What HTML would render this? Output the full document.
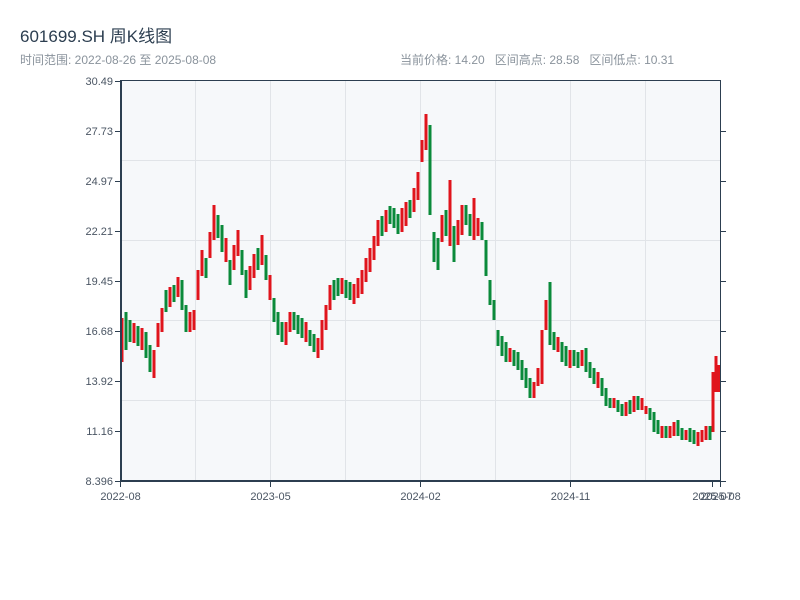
<!DOCTYPE html>
<html><head><meta charset="utf-8"><style>
body{margin:0;width:800px;height:600px;background:#fff;font-family:"Liberation Sans","Noto Sans CJK SC",sans-serif;overflow:hidden;position:relative}
.t{position:absolute;left:20px;top:22px;font-size:17px;color:#2c3e50;z-index:2}
.s{position:absolute;top:51px;font-size:12px;color:#8a939c;z-index:2}
svg{position:absolute;left:0;top:0}
</style></head><body>
<div class="t">601699.SH 周K线图</div>
<div class="s" style="left:20px">时间范围: 2022-08-26 至 2025-08-08</div>
<div class="s" style="left:400px">当前价格: 14.20&nbsp;&nbsp; 区间高点: 28.58&nbsp;&nbsp; 区间低点: 10.31</div>
<svg width="800" height="600" font-family="Liberation Sans, sans-serif">
<rect x="121" y="81" width="599" height="400" fill="#f6f8fa"/>
<g stroke="#e1e4e8" stroke-width="1">
<line x1="121" x2="720" y1="160.5" y2="160.5"/><line x1="121" x2="720" y1="240.5" y2="240.5"/><line x1="121" x2="720" y1="320.5" y2="320.5"/><line x1="121" x2="720" y1="400.5" y2="400.5"/>
<line x1="195.5" x2="195.5" y1="81" y2="481"/><line x1="270.5" x2="270.5" y1="81" y2="481"/><line x1="345.5" x2="345.5" y1="81" y2="481"/><line x1="420.5" x2="420.5" y1="81" y2="481"/><line x1="495.5" x2="495.5" y1="81" y2="481"/><line x1="570.5" x2="570.5" y1="81" y2="481"/><line x1="645.5" x2="645.5" y1="81" y2="481"/>
</g>
<path fill="none" stroke="#e0141c" stroke-width="3" d="M122 318V362M134 323V343M142 328V350M154 350V378M158 323V347M162 308V332M170 287V307M178 277V297M190 312V332M194 310V330M198 270V300M202 250V276M210 232V258M214 205V240M226 238V262M234 245V270M238 230V256M250 266V290M254 254V278M262 235V265M270 275V300M286 322V345M290 312V332M306 322V342M318 338V358M322 320V350M326 305V330M330 285V310M342 278V294M354 284V304M358 278V298M362 270V294M366 258V282M370 248V272M374 236V260M378 220V246M386 210V232M402 208V232M406 202V226M414 188V212M418 172V200M422 140V162M426 114V150M442 215V242M450 180V246M458 220V245M462 205V235M474 198V240M478 218V236M510 348V362M534 382V398M538 368V386M542 330V384M546 300V330M558 337V352M570 350V368M582 350V366M598 372V388M614 398V408M626 402V416M634 396V412M642 398V410M646 406V414M662 426V438M670 426V438M674 422V436M686 430V440M698 432V446M702 430V442M706 426V440M713 372V432M716 356V392M719 365V392"/>
<path fill="none" stroke="#0a8a3a" stroke-width="3" d="M126 312V350M130 320V342M138 326V346M146 332V358M150 345V372M166 290V312M174 285V302M182 280V310M186 305V332M206 258V278M218 215V238M222 225V252M230 260V285M242 250V275M246 270V298M258 248V270M266 255V280M274 298V322M278 312V335M282 322V342M294 312V330M298 315V334M302 318V338M310 330V346M314 334V352M334 280V300M338 278V296M346 280V298M350 282V300M382 216V236M390 206V224M394 208V228M398 214V234M410 200V218M430 125V215M434 232V262M438 238V270M446 210V236M454 226V262M466 205V225M470 214V236M482 222V240M486 240V276M490 280V305M494 300V320M498 330V346M502 336V356M506 342V362M514 350V366M518 352V370M522 360V380M526 368V388M530 378V398M550 282V345M554 332V350M562 342V362M566 346V366M574 350V366M578 352V368M586 348V372M590 362V378M594 368V384M602 378V396M606 388V406M610 398V408M618 400V412M622 404V416M630 400V414M638 396V410M650 408V420M654 412V432M658 420V434M666 426V438M678 420V436M682 428V440M690 428V442M694 430V444M710 426V440"/>
<g stroke="#2c3e50" fill="none">
<line x1="121" x2="121" y1="80" y2="482" stroke-width="2"/>
<line x1="120" x2="721" y1="481" y2="481" stroke-width="2"/>
<line x1="720.5" x2="720.5" y1="80" y2="481"/>
<line x1="121" x2="720" y1="80.5" y2="80.5"/>
<path d="M115 81.5H121M115 131.5H121M115 181.5H121M115 231.5H121M115 281.5H121M115 331.5H121M115 381.5H121M115 431.5H121M115 481.5H121M720 131.5H726M720 181.5H726M720 231.5H726M720 281.5H726M720 331.5H726M720 381.5H726M720 431.5H726M720 481.5H726M120.5 481V487M270.5 481V487M420.5 481V487M570.5 481V487M712.5 481V487M720.5 481V487"/>
</g>
<g fill="#4a5563" font-size="11" text-anchor="end">
<text x="113" y="85">30.49</text><text x="113" y="135">27.73</text><text x="113" y="185">24.97</text><text x="113" y="235">22.21</text><text x="113" y="285">19.45</text><text x="113" y="335">16.68</text><text x="113" y="385">13.92</text><text x="113" y="435">11.16</text><text x="113" y="485">8.396</text>
</g>
<g fill="#4a5563" font-size="11" text-anchor="middle">
<text x="120.5" y="500">2022-08</text><text x="270.5" y="500">2023-05</text><text x="420.5" y="500">2024-02</text><text x="570.5" y="500">2024-11</text><text x="712.5" y="500">2025-07</text><text x="720.5" y="500">2025-08</text>
</g>
</svg>
</body></html>
